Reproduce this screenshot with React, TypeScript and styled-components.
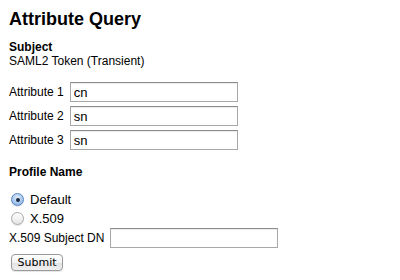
import styled, { createGlobalStyle } from "styled-components";

const GlobalStyle = createGlobalStyle`
    html, body {
        margin: 0;
        padding: 0;
        background: #ffffff;
    }
    body {
        font-family: "Liberation Sans", Arial, sans-serif;
        font-size: 12px;
        color: #000000;
    }
`;

const attributes = [
    { label: "Attribute 1", value: "cn" },
    { label: "Attribute 2", value: "sn" },
    { label: "Attribute 3", value: "sn" },
];

function Radio({ checked, label }: { checked?: boolean; label: string }) {
    return (
        <RadioRow>
            <RadioDot $checked={checked} />
            <RadioText>{label}</RadioText>
        </RadioRow>
    );
}

function App() {
    return (
        <Page>
            <GlobalStyle />
            <Title>Attribute Query</Title>

            <Section>
                <Label>Subject</Label>
                <Text>SAML2 Token (Transient)</Text>
            </Section>

            <Fields>
                {attributes.map((a) => (
                    <FieldRow key={a.label}>
                        <FieldLabel>{a.label}</FieldLabel>
                        <TextInput defaultValue={a.value} />
                    </FieldRow>
                ))}
            </Fields>

            <ProfileTitle>Profile Name</ProfileTitle>

            <RadioGroup>
                <Radio checked label="Default" />
                <Radio label="X.509" />
            </RadioGroup>

            <FieldRow>
                <FieldLabel>X.509 Subject DN</FieldLabel>
                <TextInput defaultValue="" />
            </FieldRow>

            <SubmitButton type="button">Submit</SubmitButton>
        </Page>
    );
}

const Page = styled.div`
    display: flex;
    flex-direction: column;
    align-items: flex-start;
    padding: 8px 9px 0;
    width: 400px;
    height: 280px;
    box-sizing: border-box;
`;

const Title = styled.h1`
    margin: 0;
    font-size: 18px;
    line-height: 22px;
    font-weight: bold;
`;

const Section = styled.div`
    margin-top: 10px;
    display: flex;
    flex-direction: column;
`;

const Label = styled.div`
    font-weight: bold;
    line-height: 14px;
`;

const Text = styled.div`
    line-height: 14px;
`;

const Fields = styled.div`
    margin-top: 14px;
    display: flex;
    flex-direction: column;
    gap: 4px;
`;

const FieldRow = styled.div`
    display: flex;
    align-items: center;
    gap: 6px;
    height: 20px;
`;

const FieldLabel = styled.span`
    line-height: 14px;
`;

const TextInput = styled.input`
    width: 168px;
    height: 20px;
    box-sizing: border-box;
    margin: 0;
    padding: 1px 3px 0;
    border: 1px solid #a8a8a8;
    border-top-color: #8c8c8c;
    box-shadow: inset 0 1px 1px rgba(0, 0, 0, 0.08);
    font-family: "Liberation Sans", Arial, sans-serif;
    font-size: 13px;
    color: #000;
    outline: none;
    background: #fff;
`;

const ProfileTitle = styled.div`
    margin-top: 15px;
    font-weight: bold;
    line-height: 14px;
`;

const RadioGroup = styled.div`
    margin-top: 11px;
    display: flex;
    flex-direction: column;
`;

const RadioRow = styled.div`
    display: flex;
    align-items: center;
    height: 19px;
    padding-left: 2px;
`;

const RadioDot = styled.span<{ $checked?: boolean }>`
    position: relative;
    width: 13px;
    height: 13px;
    border-radius: 50%;
    box-sizing: border-box;
    border: 1px solid ${(p) => (p.$checked ? "#5a86c4" : "#a9a9a9")};
    background: ${(p) =>
        p.$checked
            ? "radial-gradient(circle at 50% 35%, #e4f0fc 0%, #a8c8ee 55%, #7aa6dc 100%)"
            : "linear-gradient(#ffffff, #e4e4e4)"};
    box-shadow: 0 1px 1px rgba(0, 0, 0, 0.12);

    &::after {
        content: "";
        display: ${(p) => (p.$checked ? "block" : "none")};
        position: absolute;
        left: 3.5px;
        top: 3.5px;
        width: 4px;
        height: 4px;
        border-radius: 50%;
        background: #1b2a40;
    }
`;

const RadioText = styled.span`
    margin-left: 6px;
    font-size: 13px;
    line-height: 14px;
`;

const SubmitButton = styled.button`
    margin: 6px 0 0 2px;
    width: 52px;
    height: 17px;
    padding: 0;
    box-sizing: border-box;
    border: 1px solid #9a9a9a;
    border-radius: 4px;
    background: linear-gradient(#ffffff 0%, #f2f2f2 50%, #e2e2e2 51%, #f0f0f0 100%);
    box-shadow: 0 1px 1px rgba(0, 0, 0, 0.1);
    font-family: "DejaVu Sans", "Lucida Grande", sans-serif;
    font-size: 11px;
    line-height: 15px;
    color: #000;
`;

export default App;
